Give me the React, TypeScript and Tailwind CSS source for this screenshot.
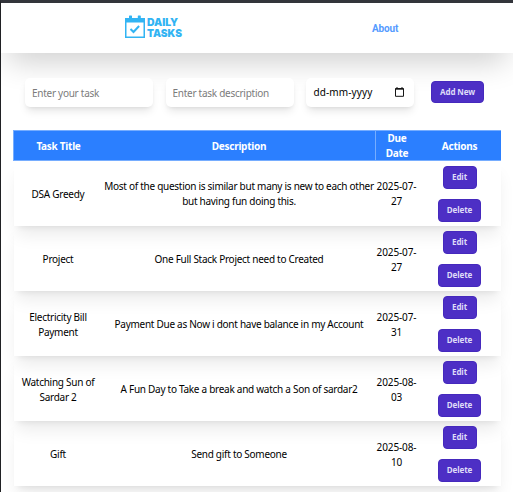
import React from "react";

const tasks = [
  { title: ["DSA Greedy"], description: ["Most of the question is similar but many is new to each other", "but having fun doing this."], date: ["2025-07-", "27"] },
  { title: ["Project"], description: ["One Full Stack Project need to Created"], date: ["2025-07-", "27"] },
  { title: ["Electricity Bill", "Payment"], description: ["Payment Due as Now i dont have balance in my Account"], date: ["2025-07-", "31"] },
  { title: ["Watching Sun of", "Sardar 2"], description: ["A Fun Day to Take a break and watch a Son of sardar2"], date: ["2025-08-", "03"] },
  { title: ["Gift"], description: ["Send gift to Someone"], date: ["2025-08-", "10"] },
];

const fieldShadow = "rounded-[5px] bg-white shadow-[0_6px_9px_-2px_rgba(0,0,0,0.1),0_2px_4px_-2px_rgba(0,0,0,0.1)]";
const field = `h-[29px] w-32 px-[7px] tracking-[-0.27px] outline-none placeholder:text-[#7b7b7b] ${fieldShadow}`;

function Lines({ lines, className = "" }: { lines: string[]; className?: string }) {
  return (
    <div className={`flex flex-col items-center justify-center whitespace-nowrap ${className}`}>
      {lines.map((line) => (
        <span key={line}>{line}</span>
      ))}
    </div>
  );
}

function Button({ label, className }: { label: string; className: string }) {
  return (
    <button
      className={`flex shrink-0 items-center justify-center rounded-[4px] border border-[#4529bd] bg-[#4d2fc5] text-[8px] leading-none font-bold tracking-[-0.1px] whitespace-nowrap text-[#dedcf8] ${className}`}
    >
      {label}
    </button>
  );
}

function Logo() {
  return (
    <svg width="60" height="26" viewBox="0 0 60 26" className="block" aria-label="Daily Tasks">
      <g fill="#32b4f3">
        <path d="M0 3h20v20H0zM1.5 7.5v14h17v-14z" fillRule="evenodd" />
        <rect x="4" y="0.5" width="3" height="4" rx="0.6" />
        <rect x="12.8" y="0.5" width="3" height="4" rx="0.6" />
        <text x="22" y="10.8" fontSize="10.2" fontWeight="900" textLength="31" lengthAdjust="spacingAndGlyphs" fontFamily="Inter, sans-serif">DAILY</text>
        <text x="22" y="22.3" fontSize="10.2" fontWeight="900" textLength="35" lengthAdjust="spacingAndGlyphs" fontFamily="Inter, sans-serif">TASKS</text>
      </g>
      <path d="m5.5 14 3 3 5.6-6" fill="none" stroke="#32b4f3" strokeWidth="2" />
    </svg>
  );
}

export default function App() {
  return (
    <div className="h-[492px] w-[513px] overflow-hidden border-t-[3px] border-l border-t-[#33353b] border-l-[#202124] bg-white font-['Noto_Sans',sans-serif] text-[10px] leading-[15px] text-black">
      <header className="flex h-[50px] items-center bg-white pl-[124px] shadow-[0_15px_31px_-7px_rgba(0,0,0,0.2)]">
        <Logo />
        <a className="ml-[187px] font-[Roboto,sans-serif] text-[10px] font-bold tracking-[-0.15px] text-[#559bff]">About</a>
      </header>

      <form className="mt-[25px] flex h-[29px] items-center pl-6">
        <input aria-label="Task" placeholder="Enter your task" className={field} />
        <input aria-label="Description" placeholder="Enter task description" className={`ml-[12.5px] ${field}`} />
        <div className={`ml-[12px] flex h-[29px] w-[108px] items-center justify-between pr-[10px] pl-2 ${fieldShadow}`}>
          <span className="tracking-[0.1px]">dd-mm-yyyy</span>
          <svg width="9" height="10" viewBox="0 0 9 10" className="mb-px">
            <path d="M.5 1.5h8v7.8h-8zM0 2.2h9M2 0v2M7 0v2" fill="none" stroke="#161616" />
          </svg>
        </div>
        <Button label="Add New" className="mb-px ml-[17.5px] h-[22px] w-[53px]" />
      </form>

      <main className="mt-[23px] ml-3 w-[488px]">
        <div className="relative z-10 grid h-[31px] grid-cols-[89px_272px_43px_83px] border-y border-l border-[#76adff] bg-[#2b7fff] font-bold tracking-[-0.27px] text-white">
          <Lines lines={["Task Title"]} />
          <Lines lines={["Description"]} />
          <div className="flex flex-col justify-center border-l border-[#76adff]">
            <Lines lines={["Due", "Date"]} />
          </div>
          <Lines lines={["Actions"]} />
        </div>
        {tasks.map((task, index) => {
          const offset = index === 0 ? "pt-px" : "pt-[2px]";
          return (
            <div
              key={task.title[0]}
              className="ml-px grid h-[65px] grid-cols-[89px_272px_43px_83px] shadow-[0_12px_16px_-3px_rgba(0,0,0,0.08),0_5px_6px_-4px_rgba(0,0,0,0.08)]"
            >
              <Lines lines={task.title} className={`${offset} pr-px tracking-[-0.27px]`} />
              <Lines lines={task.description} className={`${offset} tracking-[-0.275px]`} />
              <Lines lines={task.date} className={`${offset} tracking-[-0.1px]`} />
              <div className="flex flex-col items-center justify-center gap-[10px]">
                <Button label="Edit" className="h-[23px] w-[34px]" />
                <Button label="Delete" className="h-[23px] w-[43px]" />
              </div>
            </div>
          );
        })}
      </main>
    </div>
  );
}
